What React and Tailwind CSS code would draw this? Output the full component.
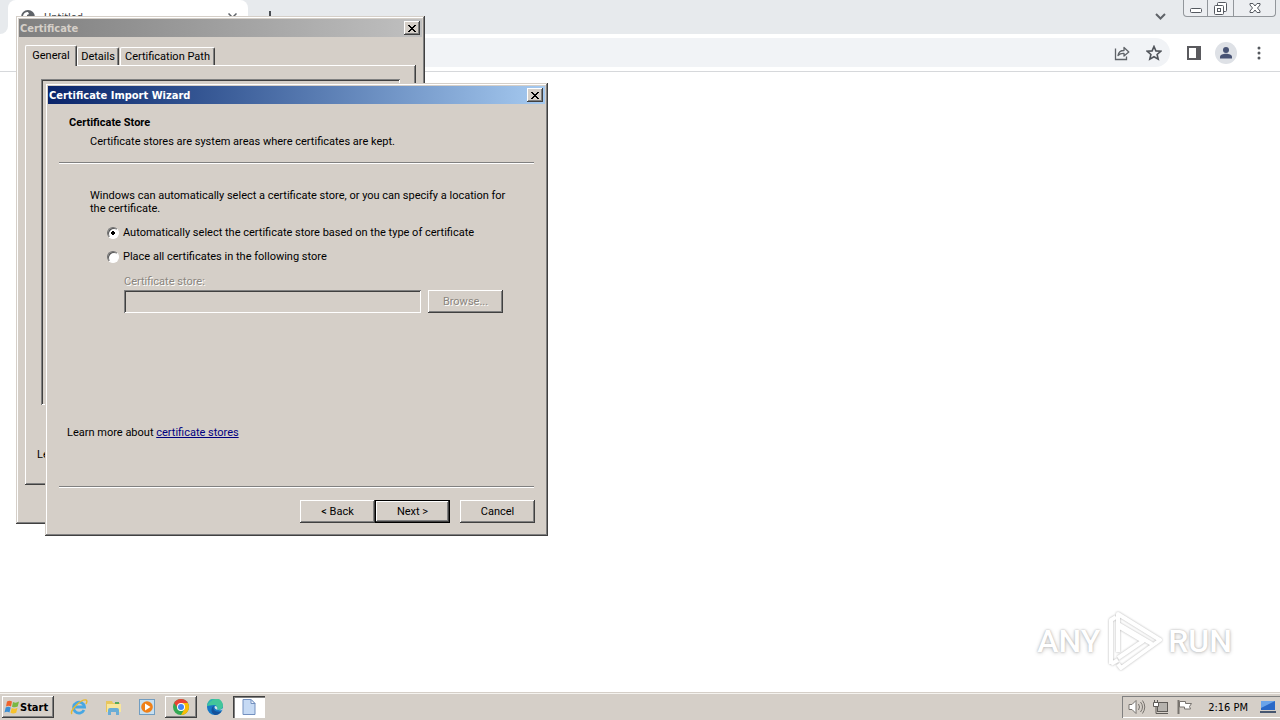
import React from "react";

const raised =
  "shadow-[inset_-1px_-1px_#404040,inset_1px_1px_#ffffff,inset_-2px_-2px_#808080]";
const windowEdge =
  "shadow-[inset_-1px_-1px_#404040,inset_1px_1px_#d5cfc8,inset_-2px_-2px_#808080,inset_2px_2px_#ffffff]";
const caption = "font-['DejaVu_Sans_Condensed','DejaVu_Sans',sans-serif] font-bold";

function CloseButton() {
  return (
    <button
      type="button"
      aria-label="Close"
      className={`flex h-[14px] w-4 items-center justify-center bg-[#d5cfc8] ${raised}`}
    >
      <svg width="8" height="7" viewBox="0 0 8 7" shapeRendering="crispEdges">
        <path
          d="M0 0h2v1h1v1h2v-1h1v-1h2v1h-1v1h-1v1h-1v1h1v1h1v1h1v1h-2v-1h-1v-1h-2v1h-1v1h-2v-1h1v-1h1v-1h1v-1h-1v-1h-1v-1h-1z"
          fill="#000"
        />
      </svg>
    </button>
  );
}

function DialogButton({ children, disabled, primary }) {
  return (
    <button
      type="button"
      disabled={disabled}
      className={`h-[23px] w-[75px] shrink-0 ${
        primary
          ? "border border-black shadow-[inset_-1px_-1px_#404040,inset_1px_1px_#ffffff,inset_-2px_-2px_#808080]"
          : raised
      } ${disabled ? "text-[#8a857e] [text-shadow:1px_1px_#ffffff]" : ""}`}
    >
      {children}
    </button>
  );
}

function Rule() {
  return <div className="mr-[11px] ml-[11px] h-[2px] border-t border-b border-t-[#808080] border-b-white" />;
}

function Radio({ label, id, checked }) {
  return (
    <div className="flex h-[13px] items-center gap-1">
      <input
        id={id}
        type="radio"
        name="store"
        defaultChecked={checked}
        className="size-[12px] appearance-none rounded-full border border-t-[#707070] border-r-white border-b-white border-l-[#707070] bg-white shadow-[inset_1px_1px_#555555] checked:bg-[radial-gradient(circle,#000_0_2px,#fff_2px)]"
      />
      <label htmlFor={id}>{label}</label>
    </div>
  );
}

function ImportWizard() {
  return (
    <section className={`absolute top-[83px] left-[45px] w-[503px] bg-[#d5cfc8] p-[3px] ${windowEdge}`}>
      <header className={`flex h-[18px] items-center justify-between bg-linear-to-r from-[#0a246a] to-[#a6caf0] pr-[2px] pl-px text-white ${caption}`}>
        <h1>Certificate Import Wizard</h1>
        <CloseButton />
      </header>
      <div className="pt-3 pb-[10px]">
        <h2 className="ml-[21px] font-bold">Certificate Store</h2>
        <p className="mt-[6px] mb-[14px] ml-[42px]">
          Certificate stores are system areas where certificates are kept.
        </p>
        <Rule />
        <div className="mt-[25px] mr-8 ml-[42px]">
          <p>
            Windows can automatically select a certificate store, or you can specify a location for
            the certificate.
          </p>
          <div className="mt-[11px] ml-[17px] flex flex-col gap-[11px]">
            <Radio id="auto" label="Automatically select the certificate store based on the type of certificate" checked />
            <Radio id="place" label="Place all certificates in the following store" />
          </div>
          <div className="mt-3 ml-[34px]">
            <label htmlFor="store-name" className="block text-[#8a857e] [text-shadow:1px_1px_#ffffff]">
              Certificate store:
            </label>
            <div className="mt-[2px] flex gap-[7px]">
              <input
                id="store-name"
                type="text"
                disabled
                className="h-[23px] w-[297px] bg-[#d5cfc8] px-1 shadow-[inset_1px_1px_#808080,inset_-1px_-1px_#ffffff,inset_2px_2px_#404040]"
              />
              <DialogButton disabled>Browse...</DialogButton>
            </div>
          </div>
        </div>
        <p className="mt-[113px] mb-[47px] ml-[19px]">
          Learn more about{" "}
          <a href="#stores" className="text-[#000080] underline">
            certificate stores
          </a>
        </p>
        <Rule />
        <footer className="mt-3 mr-[10px] flex justify-end">
          <DialogButton>&lt; Back</DialogButton>
          <DialogButton primary>Next &gt;</DialogButton>
          <div className="ml-[10px] flex">
            <DialogButton>Cancel</DialogButton>
          </div>
        </footer>
      </div>
    </section>
  );
}

function CertificateWindow() {
  const tab =
    "rounded-t-[2px] border-t border-r border-l border-t-white border-r-[#404040] border-l-white shadow-[inset_-1px_0_#808080]";
  return (
    <section className={`absolute top-4 left-4 flex h-[508px] w-[409px] flex-col bg-[#d5cfc8] p-[3px] ${windowEdge}`}>
      <header className={`flex h-[18px] shrink-0 items-center justify-between bg-linear-to-r from-[#808080] to-[#c0c0c0] pr-[2px] pl-px text-[#d5cfc8] ${caption}`}>
        <h1>Certificate</h1>
        <CloseButton />
      </header>
      <div className="flex min-h-0 flex-1 flex-col pt-2 pr-[6px] pb-9 pl-[6px]">
        <div role="tablist" className="flex h-5 shrink-0 items-end">
          <button type="button" role="tab" aria-selected="true" className={`z-10 -mb-px h-[21px] w-[52px] bg-[#d5cfc8] pb-[2px] ${tab}`}>
            General
          </button>
          <button type="button" role="tab" aria-selected="false" className={`h-[18px] w-[42px] ${tab}`}>
            Details
          </button>
          <button type="button" role="tab" aria-selected="false" className={`ml-px h-[18px] w-[95px] ${tab}`}>
            Certification Path
          </button>
        </div>
        <div className={`flex flex-1 flex-col pt-[14px] pr-4 pl-4 ${raised}`}>
          <div className="h-[326px] shadow-[inset_1px_1px_#808080,inset_-1px_-1px_#ffffff,inset_2px_2px_#404040]" />
          <p className="mt-[43px] -ml-1">Le</p>
        </div>
      </div>
    </section>
  );
}

function Browser() {
  return (
    <div className="flex flex-1 flex-col bg-white">
      <div className="flex h-[34px] items-start bg-[#e7eaed] pr-1">
        <div className="flex h-[34px] w-2 shrink-0 items-end bg-white">
          <div className="h-[34px] w-2 rounded-br-lg bg-[#e7eaed]" />
        </div>
        <div className="flex h-[34px] w-60 shrink-0 items-center gap-[9px] rounded-t-lg bg-white pr-[11px] pl-[13px] text-[#3c4043]">
          <svg width="14" height="14" viewBox="0 0 14 14">
            <circle cx="7" cy="7" r="7" fill="#5f6368" />
            <path d="M2 6a5 5 0 0 1 5-4l1 2-2 1v2l2 1 1 3-2 1a5 5 0 0 1-5-6z" fill="#fff" />
          </svg>
          <span className="flex-1 font-['DejaVu_Sans_Condensed',sans-serif] text-[11px]">Untitled</span>
          <svg width="9" height="9" viewBox="0 0 9 9" stroke="#5f6368" strokeWidth="1.5">
            <path d="M.5 .5l8 8M8.500 .5l-8 8" />
          </svg>
        </div>
        <svg className="mt-[11px] ml-4" width="12" height="12" viewBox="0 0 12 12" stroke="#4b4f54" strokeWidth="2">
          <path d="M6 0v12M0 6h12" />
        </svg>
        <div className="flex-1" />
        <svg className="mt-[13px] mr-[17px]" width="11" height="8" viewBox="0 0 11 8" fill="none" stroke="#5f6368" strokeWidth="2">
          <path d="M1 1l4.500 4.500L10 1" />
        </svg>
        <div className="flex h-[17px] w-[93px] rounded-b-[4px] border border-t-0 border-[#92969b] bg-[#eceef1]">
          <button type="button" aria-label="Minimize" className="flex w-6 justify-center border-r border-[#92969b] pt-2">
            <svg width="12" height="5" viewBox="0 0 12 5">
              <rect x=".5" y=".5" width="11" height="4" rx="1" fill="#fff" stroke="#555960" />
            </svg>
          </button>
          <button type="button" aria-label="Restore" className="flex w-[26px] justify-center border-r border-[#92969b] pt-[2px]">
            <svg width="13" height="13" viewBox="0 0 13 13" fill="#fff" stroke="#555960">
              <rect x="3.500" y=".5" width="9" height="9" rx="1" />
              <rect x=".5" y="3.500" width="9" height="9" rx="1" />
              <rect x="3.500" y="6.500" width="3" height="3" />
            </svg>
          </button>
          <button type="button" aria-label="Close browser" className="flex flex-1 justify-center pt-[3px]">
            <svg width="12" height="10" viewBox="0 0 12 10" fill="#fff" stroke="#555960">
              <path d="M1 .5h3l2 2.500 2-2.500h3v1.500L8.500 5 11 8v1.500H8L6 7 4 9.500H1V8l2.500-3L1 2z" />
            </svg>
          </button>
        </div>
      </div>
      <div className="flex h-[38px] items-center border-b border-[#d6d8db] bg-white pr-[13px]">
        <div className="ml-4 flex h-[29px] flex-1 items-center justify-end gap-4 rounded-full bg-[#f1f3f6] pr-2">
          <svg width="16" height="16" viewBox="0 0 16 16" fill="none" stroke="#5f6368" strokeWidth="1.300">
            <path d="M1.500 3.500v11h11v-3" />
            <path d="M4 10.500c.5-3.500 2.500-5 6-5V2.500L14.800 7 10 11V8.300c-3-.2-4.500.5-6 2.200z" strokeLinejoin="round" />
          </svg>
          <svg width="16" height="16" viewBox="0 0 16 16" fill="none" stroke="#50545a" strokeWidth="1.600">
            <path d="M8 1.500l1.900 4.400 4.800.4-3.600 3.200 1.100 4.700L8 11.700l-4.200 2.500 1.100-4.700L1.300 6.300l4.800-.4z" />
          </svg>
        </div>
        <svg className="ml-[17px]" width="14" height="14" viewBox="0 0 14 14">
          <path d="M0 0h14v14H0zM2 2v10h7V2z" fill="#5a5a5e" fillRule="evenodd" />
        </svg>
        <svg className="ml-[14px]" width="22" height="22" viewBox="0 0 22 22">
          <circle cx="11" cy="11" r="11" fill="#dee1e6" />
          <circle cx="11" cy="8" r="3" fill="#485374" />
          <path d="M5 16.500V15c0-2 3-3.200 6-3.200s6 1.200 6 3.200v1.500z" fill="#485374" />
        </svg>
        <svg className="ml-5" width="4" height="14" viewBox="0 0 4 14" fill="#55595e">
          <circle cx="2" cy="2" r="1.500" />
          <circle cx="2" cy="7" r="1.500" />
          <circle cx="2" cy="12" r="1.500" />
        </svg>
        <span className="w-[6px]" />
      </div>
    </div>
  );
}

function Watermark() {
  return (
    <div className="absolute right-12 bottom-12 flex h-[62px] items-center font-[Roboto,sans-serif] text-[32px] font-medium text-white [text-shadow:0_0_2px_#b0b0b0,0_1px_4px_#c8c8c8]">
      <span>ANY</span>
      <svg className="mx-1 drop-shadow-[0_0_1px_#b0b0b0]" width="60" height="62" viewBox="0 0 60 62" fill="none" stroke="#fff" strokeWidth="4" strokeLinejoin="round">
        <path d="M7 54V10l5-3M7 54l7-4M14 42V4l42 26L17 58l-3-4M14 14l34 20M14 42V16l25 15-25 17" />
      </svg>
      <span>RUN</span>
    </div>
  );
}

function WindowsFlag() {
  return (
    <svg width="16" height="16" viewBox="0 0 16 16">
      <path d="M3 2.500q2.500-1.500 5 0L7 7.500q-2.500-1.500-5 0z" fill="#ef632b" />
      <path d="M9 3q3 1.500 6-.5l-1.300 5Q11 9 8 7.800z" fill="#79b841" />
      <path d="M1.700 8.500q2.500-1.500 5 0l-1.200 5q-2.500-1.500-5 0z" fill="#3c8fd4" />
      <path d="M7.700 9q3 1.500 5.800-.3l-1.300 5q-3 1.600-5.700.1z" fill="#f7c22c" />
    </svg>
  );
}

function Taskbar() {
  const slot = "flex h-[22px] w-8 items-center justify-center";
  return (
    <nav className="flex h-7 shrink-0 items-center border-t border-[#d5cfc8] bg-[#d5cfc8] pt-px pl-[2px] shadow-[inset_0_1px_#f5f3ef]">
      <button type="button" className={`flex h-[22px] w-[52px] items-center pl-[2px] ${raised} ${caption}`}>
        <WindowsFlag />
        Start
      </button>
      <div className="ml-[9px] flex flex-1 items-center gap-[2px]">
        <button type="button" aria-label="Internet Explorer" className={slot}>
          <svg width="18" height="18" viewBox="0 0 18 18" fill="none">
            <path d="M14 12A5.500 5.500 0 1 1 14.500 9H5" stroke="#47a7e3" strokeWidth="2.800" />
            <path d="M2 16C-1 13 11 1 16 2c1.500.5.800 2.500 0 4" stroke="#e8b92f" strokeWidth="1.400" />
          </svg>
        </button>
        <button type="button" aria-label="Explorer" className={slot}>
          <svg width="17" height="17" viewBox="0 0 17 17">
            <path d="M1 2h6l1 2h7v9H1z" fill="#e8c65d" />
            <path d="M2 5h14v8H2z" fill="#f8e69c" />
            <path d="M3 16v-5q0-2 2-2h7q2 0 2 2v5h-3v-3H6v3z" fill="#69add6" />
            <path d="M10 3h4v2h-4z" fill="#58a959" />
          </svg>
        </button>
        <button type="button" aria-label="Media Player" className={slot}>
          <svg width="16" height="16" viewBox="0 0 16 16">
            <rect x=".5" y=".5" width="15" height="15" fill="#c7dff0" stroke="#719dc1" />
            <circle cx="8" cy="8" r="5.800" fill="#f08018" />
            <path d="M6 4.500l5.500 3.500L6 11.500z" fill="#fff" />
          </svg>
        </button>
        <button type="button" aria-label="Chrome" className={`${slot} ${raised}`}>
          <svg width="16" height="16" viewBox="0 0 16 16">
            <circle cx="8" cy="8" r="8" fill="#34a853" />
            <path d="M1.100 4A8 8 0 0 1 14.900 4H8L5 9.500z" fill="#e94235" />
            <path d="M14.900 4A8 8 0 0 1 8 16l3.500-6L8 4z" fill="#fbbc04" />
            <circle cx="8" cy="8" r="4" fill="#fff" />
            <circle cx="8" cy="8" r="3" fill="#4285f4" />
          </svg>
        </button>
        <button type="button" aria-label="Edge" className={slot}>
          <svg width="16" height="16" viewBox="0 0 16 16">
            <circle cx="8" cy="8" r="8" fill="#1677c5" />
            <path d="M0 7a8 8 0 0 1 16 0c0 3-3 4.500-6 3.500 1-2 0-4.500-3-4.500-3 0-5 1-7 1z" fill="#42c69a" />
            <path d="M0 7a8 8 0 0 1 8-7c-4 1-6 3-8 7z" fill="#249fc9" />
            <path d="M7 7c-2 4 2 7 7.500 5.200A8 8 0 0 1 8 16C3 14 4 8 7 7z" fill="#15519a" />
            <path d="M8 7c-1.500 2 1 5 7.500 4l.5-2c-1.500 2-4 2.500-6 1.500C11 9 10 7 8 7z" fill="#d5e7e6" />
          </svg>
        </button>
        <button type="button" aria-label="Certificate" className={`${slot} bg-white shadow-[inset_1px_1px_#404040,inset_2px_2px_#808080,inset_-1px_-1px_#ffffff]`}>
          <svg width="14" height="16" viewBox="0 0 14 16">
            <path d="M1 .5h8l4 4v11H1z" fill="#c6daf4" stroke="#7390bf" />
            <path d="M9 .5v4h4z" fill="#f4f9ff" stroke="#7390bf" />
          </svg>
        </button>
      </div>
      <div className="flex h-[22px] items-center pl-[6px] shadow-[inset_1px_1px_#808080,inset_0_-1px_#ffffff]">
        <svg width="18" height="16" viewBox="0 0 18 16" fill="none" stroke="#77736e">
          <path d="M1 5.500h3l4-4v13l-4-4H1z" fill="#fff" />
          <path d="M10.500 5q2 3 0 6M12.500 3q4 5 0 10M14.500 1.500q4.500 6.500 0 13" />
        </svg>
        <svg className="ml-[6px]" width="18" height="16" viewBox="0 0 18 16" fill="none" stroke="#5e5b57">
          <rect x="5.500" y="3.500" width="10" height="9" fill="#b5b2ad" />
          <path d="M8 14.500h8M2.500 1v3M5.500 1v3M4 7v7.500h4" />
          <path d="M1.500 3.500h5v4h-5z" fill="#fff" />
        </svg>
        <svg className="ml-[6px]" width="17" height="16" viewBox="0 0 17 16" stroke="#77736e">
          <path d="M2.500 1v14" strokeWidth="2" />
          <path d="M3.500 2.500h6v2h6l-2 3 1 2.500H8.500V8h-5z" fill="#fff" />
        </svg>
        <time className="ml-[15px] font-['DejaVu_Sans_Condensed',sans-serif]">2:16 PM</time>
        <svg className="mr-1 ml-3" width="16" height="14" viewBox="0 0 16 14">
          <path d="M1 1h14v9H1z" fill="#2868c7" />
          <path d="M1 1h14L1 8z" fill="#69a4ea" />
          <path d="M0 11h16v2H0z" fill="#46566f" />
        </svg>
      </div>
    </nav>
  );
}

export default function App() {
  return (
    <main className="relative flex min-h-screen flex-col overflow-hidden bg-white font-[Roboto,'Liberation_Sans',sans-serif] text-[11px] leading-[13px] text-black">
      <Browser />
      <Watermark />
      <CertificateWindow />
      <ImportWizard />
      <Taskbar />
    </main>
  );
}
